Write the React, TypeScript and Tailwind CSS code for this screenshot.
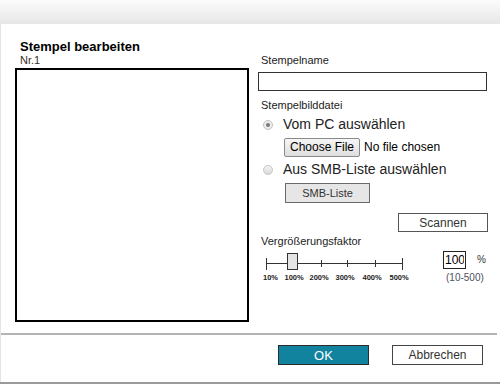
export default function App() {
  return (
    <div className="w-[500px] h-[385px] bg-white text-[#222] font-['Liberation_Sans',Arial,sans-serif]">
      <div className="flex h-[384px] flex-col border-b-2 border-b-[#9a9a9a]">
        {/* Header strip */}
        <div className="h-[24px] bg-linear-to-b from-[#fbfbfb] to-[#e7e7e7]" />

        <div className="flex flex-1 flex-col border-l border-l-[#e4e4e4]">
          <h1 className="mt-[15px] pl-[19px] text-[13px] leading-[15px] font-bold text-black">
            Stempel bearbeiten
          </h1>

          <div className="flex">
            {/* Preview */}
            <div className="ml-[14px] w-[234px]">
              <div className="pl-[5px] text-[11px] leading-[13px] text-[#3a3020]">Nr.1</div>
              <div className="mt-[1px] h-[254px] w-[234px] border-2 border-black bg-white" />
            </div>

            {/* Settings */}
            <div className="ml-[9px] w-[230px]">
              <div className="pl-[3px] text-[11px] leading-[13px]">Stempelname</div>
              <input className="mt-[5px] block h-[19px] w-[229px] border border-[#333] bg-white px-1 text-[12px] outline-none" />

              <div className="mt-[8px] pl-[3px] text-[11px] leading-[13px]">Stempelbilddatei</div>

              <label className="mt-[4px] flex h-[16px] items-center">
                <span className="ml-[5px] mt-[2px] flex h-[10px] w-[10px] items-center justify-center rounded-full border border-[#c2c2c2] bg-[#ececec]">
                  <span className="h-[4px] w-[4px] rounded-full bg-[#7a7a7a]" />
                </span>
                <span className="ml-[10px] text-[14px] leading-[16px]">Vom PC auswählen</span>
              </label>

              <div className="mt-[6px] flex items-center pl-[26px]">
                <button className="h-[19px] rounded-[2px] border border-[#8a8a8a] bg-linear-to-b from-[#f6f6f6] to-[#dedede] px-[5px] text-[12px] leading-[15px] text-black">
                  Choose File
                </button>
                <span className="ml-[4px] text-[12px] leading-[15px] text-black">No file chosen</span>
              </div>

              <label className="mt-[4px] flex h-[16px] items-center">
                <span className="ml-[5px] mt-[2px] h-[10px] w-[10px] rounded-full border border-[#c6c6c6] bg-linear-to-b from-[#f4f4f4] to-[#dadada]" />
                <span className="ml-[10px] text-[14px] leading-[16px]">Aus SMB-Liste auswählen</span>
              </label>

              <button className="ml-[27px] mt-[6px] block h-[20px] w-[85px] border border-[#6a6a6a] bg-[#e6e6e6] text-[11px] text-[#333]">
                SMB-Liste
              </button>

              <div className="mt-[10px] flex justify-end">
                <button className="h-[19px] w-[90px] border border-[#555] bg-white text-[12px] text-[#333]">
                  Scannen
                </button>
              </div>

              <div className="mt-[3px] pl-[3px] text-[11px] leading-[13px]">Vergrößerungsfaktor</div>

              <div className="mt-[3px] flex">
                <svg width="150" height="32" viewBox="0 0 150 32" className="ml-[5px] shrink-0">
                  <g stroke="#333" strokeWidth="1">
                    <line x1="3.5" y1="12.5" x2="139.5" y2="12.5" />
                    <line x1="3.5" y1="7" x2="3.5" y2="19" />
                    <line x1="139.5" y1="7" x2="139.5" y2="19" />
                    <line x1="58.5" y1="9" x2="58.5" y2="16" />
                    <line x1="84.5" y1="9" x2="84.5" y2="16" />
                    <line x1="112.5" y1="9" x2="112.5" y2="16" />
                  </g>
                  <rect x="24.5" y="2.5" width="10" height="16" fill="#e4e4e4" stroke="#333" />
                  <g fontSize="7.5" fontWeight="bold" fill="#222" fontFamily="'Liberation Sans', Arial, sans-serif">
                    <text x="0" y="29">10%</text>
                    <text x="21.5" y="29">100%</text>
                    <text x="46.5" y="29">200%</text>
                    <text x="72.5" y="29">300%</text>
                    <text x="99.5" y="29">400%</text>
                    <text x="126.5" y="29">500%</text>
                  </g>
                </svg>

                <div className="ml-[30px] flex flex-col">
                  <div className="flex items-start">
                    <input
                      defaultValue="100"
                      className="h-[18px] w-[23px] border border-[#222] bg-white px-[1px] text-[12px] leading-[16px] text-black outline-none"
                    />
                    <span className="ml-[11px] mt-[3px] text-[10px] leading-[12px] text-[#333]">%</span>
                  </div>
                  <span className="ml-[3px] mt-[3px] text-[10px] leading-[12px] text-[#4a5060]">(10-500)</span>
                </div>
              </div>
            </div>
          </div>

          <div className="mr-[3px] mt-[11px] h-[2px] bg-[#b4b4b4]" />

          <div className="mt-[10px] flex justify-end gap-[23px] pr-[17px]">
            <button className="h-[20px] w-[91px] border border-[#2b2b2b] bg-[#12839f] text-[13px] text-white">
              OK
            </button>
            <button className="h-[20px] w-[91px] border border-[#444] bg-white text-[12px] text-[#333]">
              Abbrechen
            </button>
          </div>
        </div>
      </div>
    </div>
  );
}
